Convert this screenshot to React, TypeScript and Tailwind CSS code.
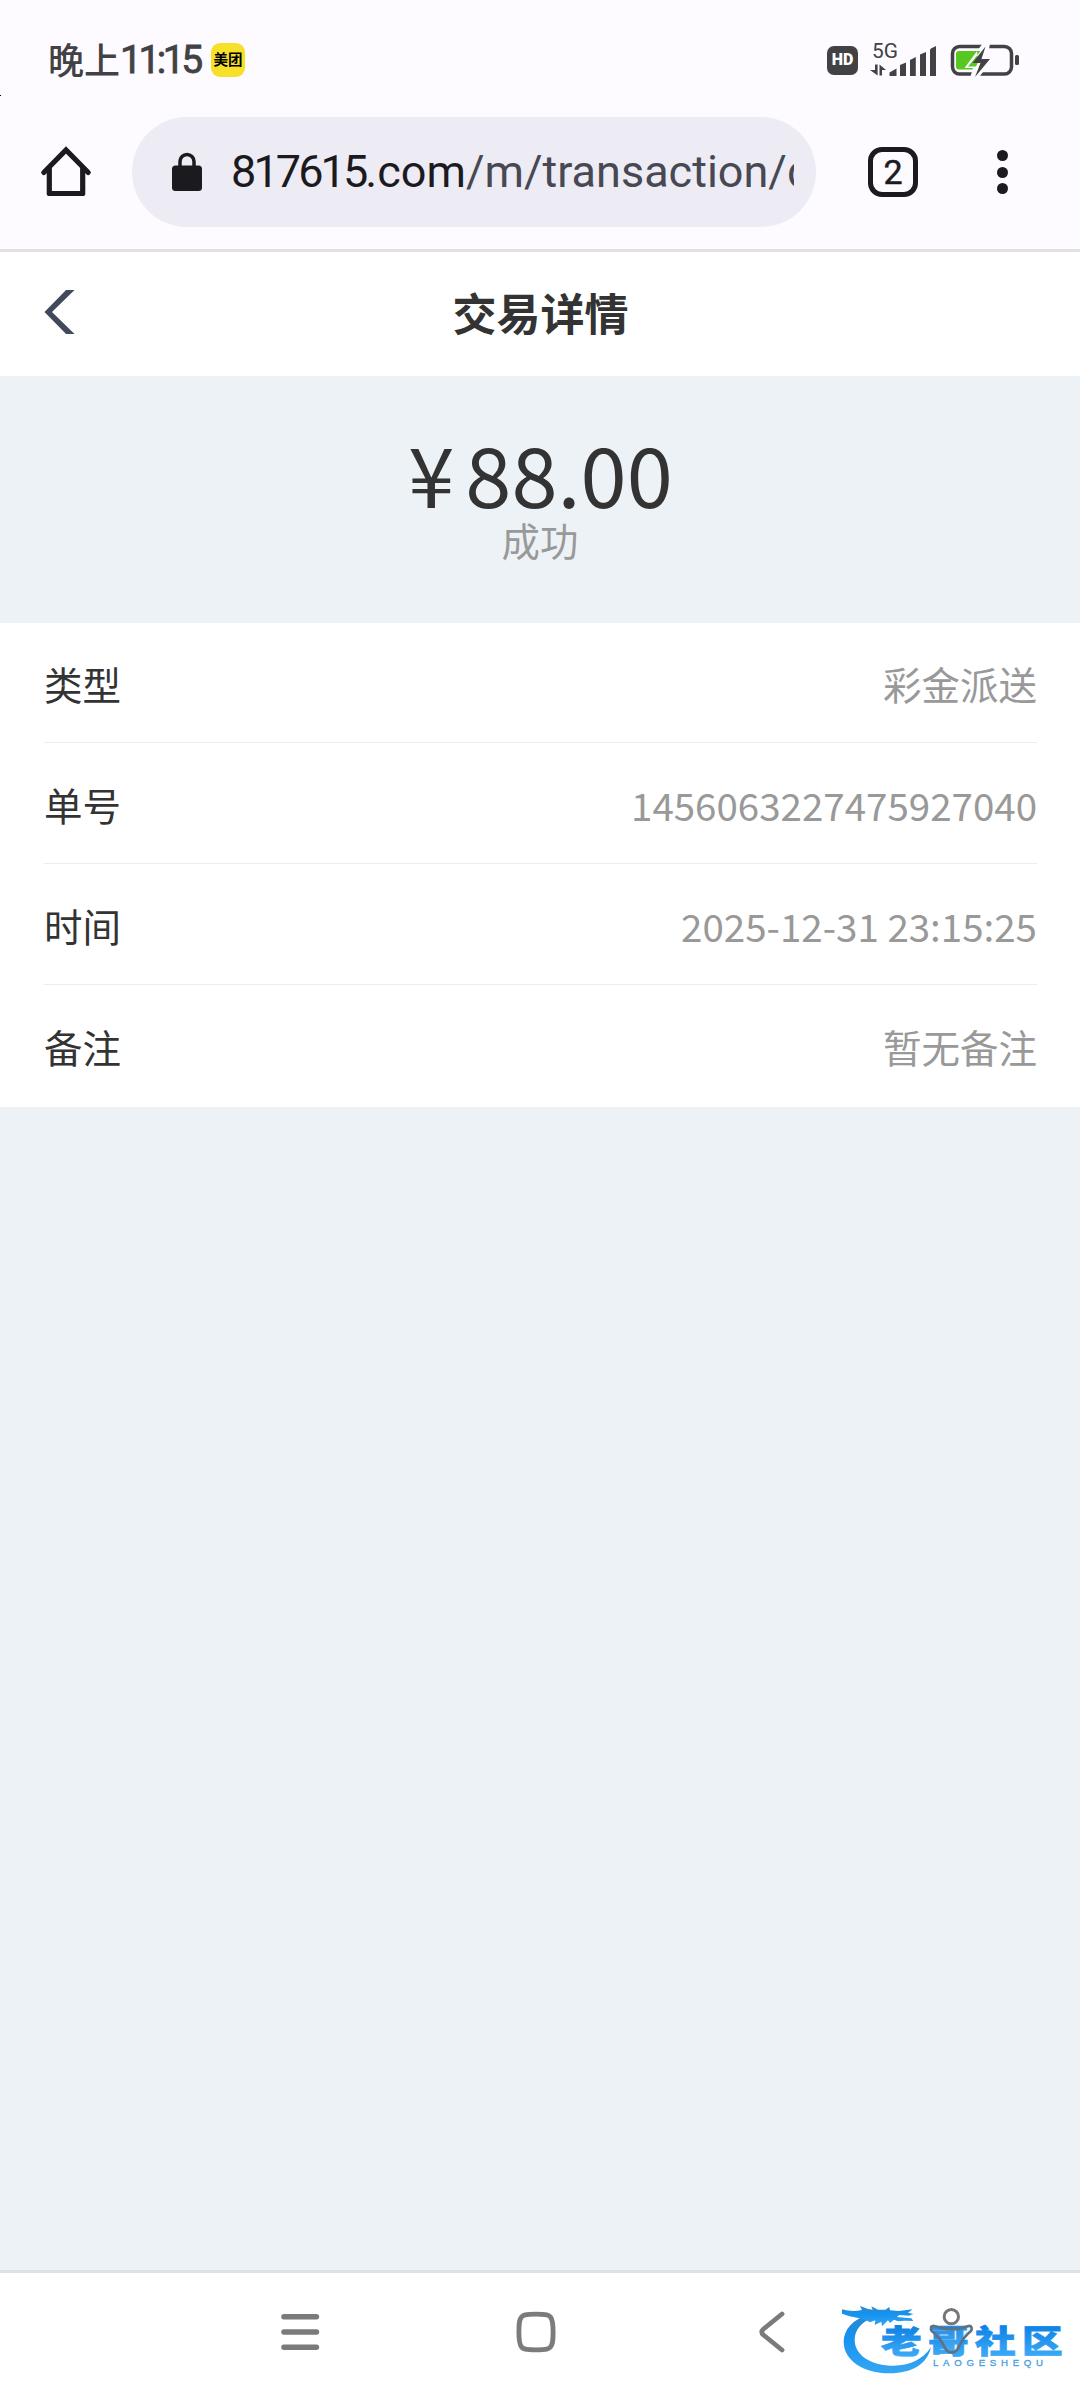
import React from 'react';

interface DetailRow {
  label: string;
  value: string;
}

const rows: DetailRow[] = [
  { label: '类型', value: '彩金派送' },
  { label: '单号', value: '1456063227475927040' },
  { label: '时间', value: '2025-12-31 23:15:25' },
  { label: '备注', value: '暂无备注' },
];

const SignalIcon: React.FC = () => (
  <svg className="ml-3 h-[36px] w-[68px] overflow-visible" viewBox="0 0 68 36" fill="#424144">
    <text x="2" y="15.500" fontSize="20.500" textLength="26" lengthAdjust="spacingAndGlyphs" fontFamily="Roboto, sans-serif">5G</text>
    <path d="M5 22.500h2.600v11L0 28h5zM9.500 33.500v-11l6.500 5.500h-4v5.500z" />
    <path d="M19.500 34v-3.500l7-4v7.500z" />
    <path d="M30 34v-11l6-2.500v13.500z" />
    <path d="M40 34v-16l5.800-3v19z" />
    <path d="M50 34v-21.500l6-2.500v24z" />
    <path d="M60 34v-26q0-1 1-1.500l5-2.500v30z" />
  </svg>
);

const BatteryIcon: React.FC = () => (
  <svg className="ml-[11px] h-[36px] w-[72px]" viewBox="0 0 72 36" fill="none">
    <rect x="3.500" y="4.500" width="59" height="27.500" rx="7" stroke="#424144" strokeWidth="3.500" />
    <rect x="66" y="13" width="4" height="10" rx="1.500" fill="#424144" />
    <path d="M10 9h20.500L24 27.500H10q-3 0-3-3V12q0-3 3-3z" fill="#57c81f" />
    <path d="M34 1h7l-2 13h7L29.500 36H21l3-10h-8.500z" fill="#fdfbff" />
    <path d="M28 9h3.500l-7 9-5.500 6.500h8l2-4z" fill="#57c81f" />
    <path d="M36.500 4.500L23.500 21h8L26 35 41 17h-8.500z" fill="#424144" />
  </svg>
);

const StatusBar: React.FC = () => (
  <div className="flex h-[117px] items-center justify-between pt-[3px] pl-12 pr-[59px] text-[#424144]">
    <div className="flex items-center">
      <span className="pb-[4px] text-[36px] leading-none font-medium font-['Noto_Sans_CJK_SC',sans-serif]">晚上</span>
      <span className="w-[82px] whitespace-nowrap text-[39px] leading-none tracking-[-3.500px] [-webkit-text-stroke:0.800px_#424144] font-['Roboto',sans-serif]">11:15</span>
      <span className="ml-[9px] flex h-[34px] w-[34px] items-center justify-center rounded-[9px] bg-[#f7e02a] pb-px text-[14.500px] leading-none font-bold text-black font-['Noto_Sans_CJK_SC',sans-serif]">
        美团
      </span>
    </div>
    <div className="flex items-center">
      <span className="flex h-[29px] w-[31px] items-center justify-center rounded-[7px] bg-[#424144] text-[16px] leading-none font-black text-white font-['Roboto',sans-serif]">
        HD
      </span>
      <SignalIcon />
      <BatteryIcon />
    </div>
  </div>
);

const AddressBar: React.FC = () => (
  <div className="flex h-[110px] items-center">
    <svg className="ml-10 h-[52px] w-[52px]" viewBox="0 0 52 52" fill="none" stroke="#1b1b1f" strokeWidth="5.200" strokeLinecap="round" strokeLinejoin="round">
      <path d="M3.800 26.500L26 4 48.200 26.500" strokeLinejoin="miter" />
      <path d="M9.300 23v24.500h33.400V23" />
    </svg>
    <div className="ml-10 flex h-[110px] w-[684px] items-center rounded-full bg-[#edecf4] pl-10 pr-[22px]">
      <svg className="h-[40px] w-[30px] shrink-0" viewBox="0 0 30 40">
        <path d="M8 16v-6.500a7 7 0 0 1 14 0V16" fill="none" stroke="#1b1b1f" strokeWidth="3.500" />
        <rect y="13.500" width="30" height="25.500" rx="3.500" fill="#1b1b1f" />
      </svg>
      <div className="ml-[29px] flex-1 overflow-hidden whitespace-nowrap text-[45px] leading-[60px] text-[#474853] font-['Roboto',sans-serif]">
        <span className="tracking-[-2.900px] text-[#1b1b1f]">817615</span>
        <span className="text-[#1b1b1f]">.com</span>
        /m/transaction/d
      </div>
    </div>
    <div className="ml-[52px] flex h-[50px] w-[50px] items-center justify-center rounded-[14px] border-[5px] border-[#1b1b1f] text-[34px] leading-none text-[#1b1b1f] [-webkit-text-stroke:0.500px_#1b1b1f] font-['Roboto',sans-serif]">
      2
    </div>
    <div className="ml-[79px] flex flex-col gap-[5.500px]">
      <i className="h-[11px] w-[11px] rounded-full bg-[#1b1b1f]" />
      <i className="h-[11px] w-[11px] rounded-full bg-[#1b1b1f]" />
      <i className="h-[11px] w-[11px] rounded-full bg-[#1b1b1f]" />
    </div>
  </div>
);

const Watermark: React.FC = () => (
  <svg className="absolute right-0 bottom-0 h-[140px] w-[260px]" viewBox="0 0 780 420" fill="none">
    <defs>
      <linearGradient id="wave" x1="0" y1="0" x2="0" y2="1">
        <stop offset="0" stopColor="#2b86cc" />
        <stop offset="0.400" stopColor="#1593f0" />
        <stop offset="1" stopColor="#36a6f2" />
      </linearGradient>
      <linearGradient id="word" x1="0" y1="0" x2="0" y2="1">
        <stop offset="0.200" stopColor="#0a80e4" />
        <stop offset="1" stopColor="#45b2fa" />
      </linearGradient>
    </defs>
    {/* dragon: body ring first, then the head with its whiskers */}
    <path
      d="M146 164C98 178 71 208 71 246c0 54 58 94 138 94 66 0 112-26 124-78-24 36-64 55-112 55-66 0-117-30-117-78 0-30 22-54 58-68z"
      fill="url(#wave)"
    />
    <path
      d="M66 148c24 7 42 6 60 2l-6-12 24 9 14 2-4-10 20 10h22l12-8 2 10 26 2 42-5-14 10 16 4-14 5-28-2-8 6 44 4 6 8-26-1-20 2-12-5-12 10-6-8-18 18-2-14-20 10 2-14-16 6c-22-14-54-14-84-26z"
      fill="url(#wave)"
    />
    <text transform="translate(183 278) scale(1 0.790)" fontSize="122" fontWeight="900" textLength="545" lengthAdjust="spacing" fill="url(#word)" stroke="url(#word)" strokeWidth="3" fontFamily="'Noto Sans CJK SC', sans-serif">
      老哥社区
    </text>
    <text x="339" y="318" fontSize="29" textLength="330" lengthAdjust="spacing" fill="#4a9fe2" stroke="#4a9fe2" strokeWidth="1" fontFamily="'Liberation Sans', sans-serif">
      LAOGESHEQU
    </text>
    {/* accessibility shortcut of the navigation bar */}
    <circle cx="394" cy="170" r="21.500" fill="#fff" stroke="#747678" strokeWidth="9" />
    <path
      d="M342 198q52 20 104 0c9-2 12 9 6 16-20 16-28 30-36 48-10 20-32 20-42 0-8-18-18-32-38-48-6-7-3-18 6-16z"
      fill="#8cc4f2"
      fillOpacity="0.200"
      stroke="#5f7284"
      strokeWidth="8"
    />
  </svg>
);

const NavigationBar: React.FC = () => (
  <div className="relative h-[130px] border-t-[3px] border-[#dde1e6] bg-white">
    <div className="flex h-[118px] items-center pl-[280px]">
      <svg className="h-[44px] w-[40px]" viewBox="0 0 40 44" stroke="#7b7b7b" strokeWidth="5.400" strokeLinecap="round">
        <path d="M3.900 6.700h32.600M3.900 22h32.600M3.900 37.300h32.600" />
      </svg>
      <svg className="ml-[194px] h-[44px] w-[44px]" viewBox="0 0 44 44" fill="none" stroke="#7b7b7b" strokeWidth="4.800">
        <path d="M22 4.200c11 0 13 .8 14.500 2.800s2.600 4 2.600 15-.9 13-2.600 15-3.500 2.800-14.500 2.800S9 39 7.500 37s-2.600-4-2.600-15 .9-13 2.600-15S11 4.200 22 4.200z" />
      </svg>
      <svg className="ml-[199px] h-[44px] w-[30px]" viewBox="0 0 30 44" fill="none" stroke="#7b7b7b" strokeWidth="4.800" strokeLinecap="round">
        <path d="M25 4L6.500 19q-3.500 3 0 6L25 40" />
      </svg>
    </div>
    <Watermark />
  </div>
);

export default function App() {
  return (
    <div className="relative flex h-[2400px] w-[1080px] flex-col overflow-hidden bg-[#edf2f6] font-['Noto_Sans_CJK_SC',sans-serif]">
      <header className="h-[252px] shrink-0 border-b-[3px] border-[#e2e2e2] bg-[#fdfbff]">
        <StatusBar />
        <AddressBar />
      </header>
      <i className="absolute top-[95px] left-0 h-px w-px bg-black" />

      <div className="grid h-[124px] shrink-0 grid-cols-3 items-center bg-white pb-[4px]">
        <svg className="ml-11 h-[44px] w-[31px]" viewBox="0 0 31 44" fill="#414a5a">
          <path d="M22 0h8.500L8 22l22.500 22H22L.5 22z" />
        </svg>
        <h1 className="pl-px text-center text-[44px] leading-none font-bold text-[#333]">交易详情</h1>
      </div>

      <section className="flex h-[247px] shrink-0 flex-col items-center pt-[52px]">
        <div className="flex gap-[11px] pl-px text-[83px] leading-[88px] text-[#333]">
          <span>¥</span>
          <span>88.00</span>
        </div>
        <div className="mt-[4px] text-[38.400px] leading-[38px] text-[#999]">成功</div>
      </section>

      <section className="h-[484px] shrink-0 bg-white pr-[43px] pl-11">
        {rows.map(row => (
          <div
            key={row.label}
            className="flex h-[121px] items-center justify-between border-b border-[#ececec] pt-[2px] text-[38.500px] leading-none first:h-[120px] last:border-white"
          >
            <span className="text-[#333]">{row.label}</span>
            <span className="text-[#999]">{row.value}</span>
          </div>
        ))}
      </section>

      <div className="mt-auto">
        <NavigationBar />
      </div>
    </div>
  );
}
